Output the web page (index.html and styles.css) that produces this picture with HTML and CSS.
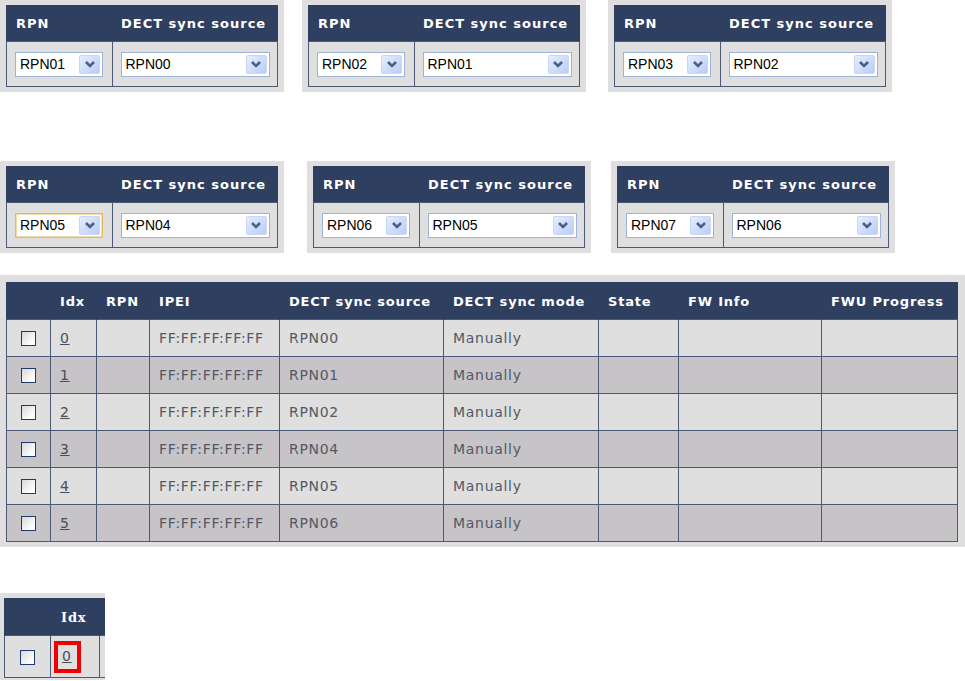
FILE: index.html
```html
<!DOCTYPE html>
<html lang="en">

<head>
  <meta charset="UTF-8"/>
  <title>DECT sync</title>
  <link rel="stylesheet" href="styles.css">
</head>

<body>
<div class="sheet">

  <div class="strip strip-top">
    <div class="shot">
      <table class="sync">
        <tr><th class="c-rpn">RPN</th><th>DECT sync source</th></tr>
        <tr>
          <td><div class="pick pick-sm">RPN01<span class="arrow"><svg viewBox="0 0 18 18" width="18" height="18"><polyline points="5,7 9,11 13,7"/></svg></span></div></td>
          <td><div class="pick pick-lg">RPN00<span class="arrow"><svg viewBox="0 0 18 18" width="18" height="18"><polyline points="5,7 9,11 13,7"/></svg></span></div></td>
        </tr>
      </table>
    </div>
    <div class="shot">
      <table class="sync">
        <tr><th class="c-rpn">RPN</th><th>DECT sync source</th></tr>
        <tr>
          <td><div class="pick pick-sm">RPN02<span class="arrow"><svg viewBox="0 0 18 18" width="18" height="18"><polyline points="5,7 9,11 13,7"/></svg></span></div></td>
          <td><div class="pick pick-lg">RPN01<span class="arrow"><svg viewBox="0 0 18 18" width="18" height="18"><polyline points="5,7 9,11 13,7"/></svg></span></div></td>
        </tr>
      </table>
    </div>
    <div class="shot">
      <table class="sync">
        <tr><th class="c-rpn">RPN</th><th>DECT sync source</th></tr>
        <tr>
          <td><div class="pick pick-sm">RPN03<span class="arrow"><svg viewBox="0 0 18 18" width="18" height="18"><polyline points="5,7 9,11 13,7"/></svg></span></div></td>
          <td><div class="pick pick-lg">RPN02<span class="arrow"><svg viewBox="0 0 18 18" width="18" height="18"><polyline points="5,7 9,11 13,7"/></svg></span></div></td>
        </tr>
      </table>
    </div>
  </div>

  <div class="strip strip-mid">
    <div class="shot">
      <table class="sync">
        <tr><th class="c-rpn">RPN</th><th>DECT sync source</th></tr>
        <tr>
          <td><div class="pick pick-sm focus">RPN05<span class="arrow"><svg viewBox="0 0 18 18" width="18" height="18"><polyline points="5,7 9,11 13,7"/></svg></span></div></td>
          <td><div class="pick pick-lg">RPN04<span class="arrow"><svg viewBox="0 0 18 18" width="18" height="18"><polyline points="5,7 9,11 13,7"/></svg></span></div></td>
        </tr>
      </table>
    </div>
    <div class="shot">
      <table class="sync">
        <tr><th class="c-rpn">RPN</th><th>DECT sync source</th></tr>
        <tr>
          <td><div class="pick pick-sm">RPN06<span class="arrow"><svg viewBox="0 0 18 18" width="18" height="18"><polyline points="5,7 9,11 13,7"/></svg></span></div></td>
          <td><div class="pick pick-lg">RPN05<span class="arrow"><svg viewBox="0 0 18 18" width="18" height="18"><polyline points="5,7 9,11 13,7"/></svg></span></div></td>
        </tr>
      </table>
    </div>
    <div class="shot">
      <table class="sync">
        <tr><th class="c-rpn">RPN</th><th>DECT sync source</th></tr>
        <tr>
          <td><div class="pick pick-sm">RPN07<span class="arrow"><svg viewBox="0 0 18 18" width="18" height="18"><polyline points="5,7 9,11 13,7"/></svg></span></div></td>
          <td><div class="pick pick-lg">RPN06<span class="arrow"><svg viewBox="0 0 18 18" width="18" height="18"><polyline points="5,7 9,11 13,7"/></svg></span></div></td>
        </tr>
      </table>
    </div>
  </div>

  <div class="shot shot-wide">
    <table class="list">
      <colgroup>
        <col style="width:44px"><col style="width:46px"><col style="width:53px"><col style="width:130px">
        <col style="width:164px"><col style="width:155px"><col style="width:80px"><col style="width:143px"><col>
      </colgroup>
      <tr>
        <th></th><th>Idx</th><th>RPN</th><th>IPEI</th><th>DECT sync source</th><th>DECT sync mode</th><th>State</th><th>FW Info</th><th>FWU Progress</th>
      </tr>
      <tr>
        <td class="chk"><span class="box"></span></td><td><a href="#">0</a></td><td></td><td>FF:FF:FF:FF:FF</td><td>RPN00</td><td>Manually</td><td></td><td></td><td></td>
      </tr>
      <tr>
        <td class="chk"><span class="box"></span></td><td><a href="#">1</a></td><td></td><td>FF:FF:FF:FF:FF</td><td>RPN01</td><td>Manually</td><td></td><td></td><td></td>
      </tr>
      <tr>
        <td class="chk"><span class="box"></span></td><td><a href="#">2</a></td><td></td><td>FF:FF:FF:FF:FF</td><td>RPN02</td><td>Manually</td><td></td><td></td><td></td>
      </tr>
      <tr>
        <td class="chk"><span class="box"></span></td><td><a href="#">3</a></td><td></td><td>FF:FF:FF:FF:FF</td><td>RPN04</td><td>Manually</td><td></td><td></td><td></td>
      </tr>
      <tr>
        <td class="chk"><span class="box"></span></td><td><a href="#">4</a></td><td></td><td>FF:FF:FF:FF:FF</td><td>RPN05</td><td>Manually</td><td></td><td></td><td></td>
      </tr>
      <tr>
        <td class="chk"><span class="box"></span></td><td><a href="#">5</a></td><td></td><td>FF:FF:FF:FF:FF</td><td>RPN06</td><td>Manually</td><td></td><td></td><td></td>
      </tr>
    </table>
  </div>

  <div class="shot shot-tiny">
    <table class="list tiny">
      <colgroup>
        <col style="width:46px"><col style="width:49px"><col style="width:60px">
      </colgroup>
      <tr><th></th><th class="serif">Idx</th><th></th></tr>
      <tr><td class="chk"><span class="box"></span></td><td class="mark-cell"><span class="mark"><a href="#">0</a></span></td><td></td></tr>
    </table>
  </div>

</div>
</body>

</html>
```

FILE: styles.css
```css
body {
  margin: 0;
  background: #ffffff;
  font-family: 'DejaVu Sans', Verdana, sans-serif;
}

.sheet {
  display: flex;
  flex-direction: column;
  align-items: flex-start;
}

.strip {
  display: flex;
}

.strip-top .shot:nth-child(2) {
  margin-left: 18px;
}

.strip-top .shot:nth-child(3) {
  margin-left: 22px;
}

.strip-mid {
  margin-top: 69px;
}

.strip-mid .shot:nth-child(2) {
  margin-left: 23px;
}

.strip-mid .shot:nth-child(3) {
  margin-left: 20px;
}

.shot {
  background: #dfdfdf;
  padding: 5px 6px;
}

/* small RPN / sync source tables */
.sync {
  width: 272px;
  border-collapse: collapse;
  border: 1px solid #2f3f60;
}

.sync th {
  background: #2f3f60;
  color: #fff;
  font-size: 13px;
  font-weight: bold;
  letter-spacing: 1px;
  text-align: left;
  height: 35px;
  padding: 0 0 0 9px;
}

.sync th.c-rpn {
  width: 96px;
}

.sync td {
  background: #dfdfdf;
  border: 1px solid #4b5976;
  height: 44px;
  padding: 0 0 0 8px;
}

.pick {
  display: flex;
  align-items: center;
  box-sizing: border-box;
  height: 25px;
  border: 1px solid #9db4d8;
  background: #fff;
  padding: 0 2px 0 4px;
  font-family: 'Liberation Sans', Arial, sans-serif;
  font-size: 14px;
  color: #000;
}

.pick.focus {
  border-color: #e3bb5c;
  box-shadow: inset 0 0 0 1px #f3dca5;
}

.pick-sm {
  width: 88px;
}

.pick-lg {
  width: 149px;
}

.pick .arrow {
  margin-left: auto;
  display: flex;
  align-items: center;
  justify-content: center;
  box-sizing: border-box;
  width: 21px;
  height: 19px;
  border: 1px solid #c9d7f6;
  border-radius: 2px;
  background: linear-gradient(135deg, #e6eefe, #b9cdf7);
}

.pick .arrow polyline {
  fill: none;
  stroke: #4c5f86;
  stroke-width: 2.6;
}

/* base station list */
.shot-wide {
  margin-top: 22px;
  padding: 7px 7px 5px 6px;
  width: 952px;
}

.list {
  width: 952px;
  table-layout: fixed;
  border-collapse: collapse;
  border: 1px solid #2f3f60;
}

.list th {
  background: #2f3f60;
  color: #fff;
  font-size: 13px;
  font-weight: bold;
  letter-spacing: 0.8px;
  text-align: left;
  height: 36px;
  padding: 0 0 0 9px;
  white-space: nowrap;
  border-left: 1px solid #2f3f60;
}

.list td {
  height: 36px;
  padding: 0 0 0 9px;
  border: 1px solid #4b5976;
  font-size: 14px;
  letter-spacing: 0.7px;
  color: #545866;
  white-space: nowrap;
}

.list tr:nth-child(even) td {
  background: #dfdfdf;
}

.list tr:nth-child(odd) td {
  background: #c6c4c7;
}

.list td a {
  color: #4a4d58;
}

.list td.chk {
  padding: 0;
  text-align: center;
}

.box {
  display: inline-block;
  vertical-align: middle;
  box-sizing: border-box;
  width: 15px;
  height: 15px;
  border: 1px solid #1d3b6c;
  background: linear-gradient(135deg, #d8d8d6, #ffffff 80%);
}

/* cropped detail */
.shot-tiny {
  margin-top: 46px;
  padding: 5px 0 5px 4px;
  width: 101px;
  height: 77px;
  overflow: hidden;
}

.tiny {
  width: 155px;
}

.tiny th {
  height: 36px;
}

.tiny th.serif {
  font-family: 'DejaVu Serif', serif;
  padding-left: 10px;
}

.tiny td {
  height: 41px;
}

.tiny td.mark-cell {
  padding: 0 0 0 3px;
}

.mark {
  display: inline-block;
  box-sizing: border-box;
  width: 27px;
  height: 32px;
  border: 4px solid #f00000;
  padding: 3px 0 0 4px;
}
```
